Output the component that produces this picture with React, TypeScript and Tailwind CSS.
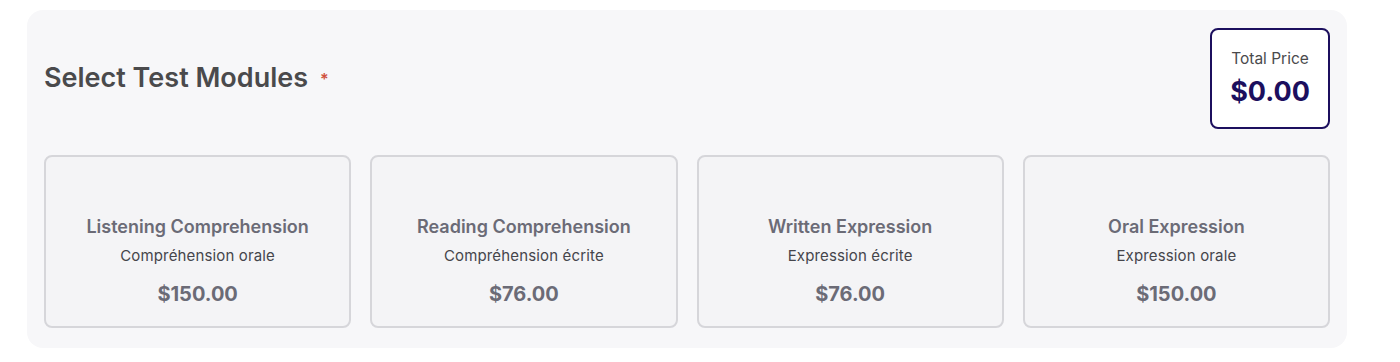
import React from "react";

type Module = {
  title: string;
  subtitle: string;
  price: number;
};

const modules: Module[] = [
  { title: "Listening Comprehension", subtitle: "Compréhension orale", price: 150 },
  { title: "Reading Comprehension", subtitle: "Compréhension écrite", price: 76 },
  { title: "Written Expression", subtitle: "Expression écrite", price: 76 },
  { title: "Oral Expression", subtitle: "Expression orale", price: 150 },
];

const formatPrice = (n: number) => `$${n.toFixed(2)}`;

const ModuleCard: React.FC<{ module: Module }> = ({ module }) => (
  <button
    type="button"
    className="flex h-[173px] flex-col items-center rounded-lg border-2 border-[#d6d6da] bg-[#f4f4f6] pt-[56px] text-center"
  >
    <span className="text-lg leading-7 font-semibold text-[#6b6b76]">{module.title}</span>
    <span className="mt-[3px] text-[15px] leading-6 tracking-[0.01em] text-[#45454b]">
      {module.subtitle}
    </span>
    <span className="mt-[12px] text-xl leading-7 font-bold text-[#6b6b76]">
      {formatPrice(module.price)}
    </span>
  </button>
);

export default function App() {
  const total = 0;

  return (
    <div className="min-h-[362px] bg-white pt-[10px] pl-[27px] font-['Inter',sans-serif]">
      <div className="w-[1320px] rounded-2xl bg-[#f7f7f9] p-[17px] pb-[20px]">
        {/* header */}
        <div className="flex items-center justify-between pt-px">
          <h2 className="flex items-center gap-[12px] text-[27px] font-semibold text-[#4a4a4c]">
            Select Test Modules
            <span className="text-base text-[#d0523f]">*</span>
          </h2>
          <div className="flex h-[101px] w-[120px] flex-col items-center justify-center rounded-lg border-2 border-[#1c0f5e] bg-white">
            <span className="text-[15.5px] leading-5 text-[#4a4a4c]">Total Price</span>
            <span className="mt-[7px] text-[27px] leading-8 font-bold text-[#1c0f5e]">
              {formatPrice(total)}
            </span>
          </div>
        </div>

        {/* module cards */}
        <div className="mt-[26px] grid grid-cols-4 gap-[19px]">
          {modules.map((m) => (
            <ModuleCard key={m.title} module={m} />
          ))}
        </div>
      </div>
    </div>
  );
}
